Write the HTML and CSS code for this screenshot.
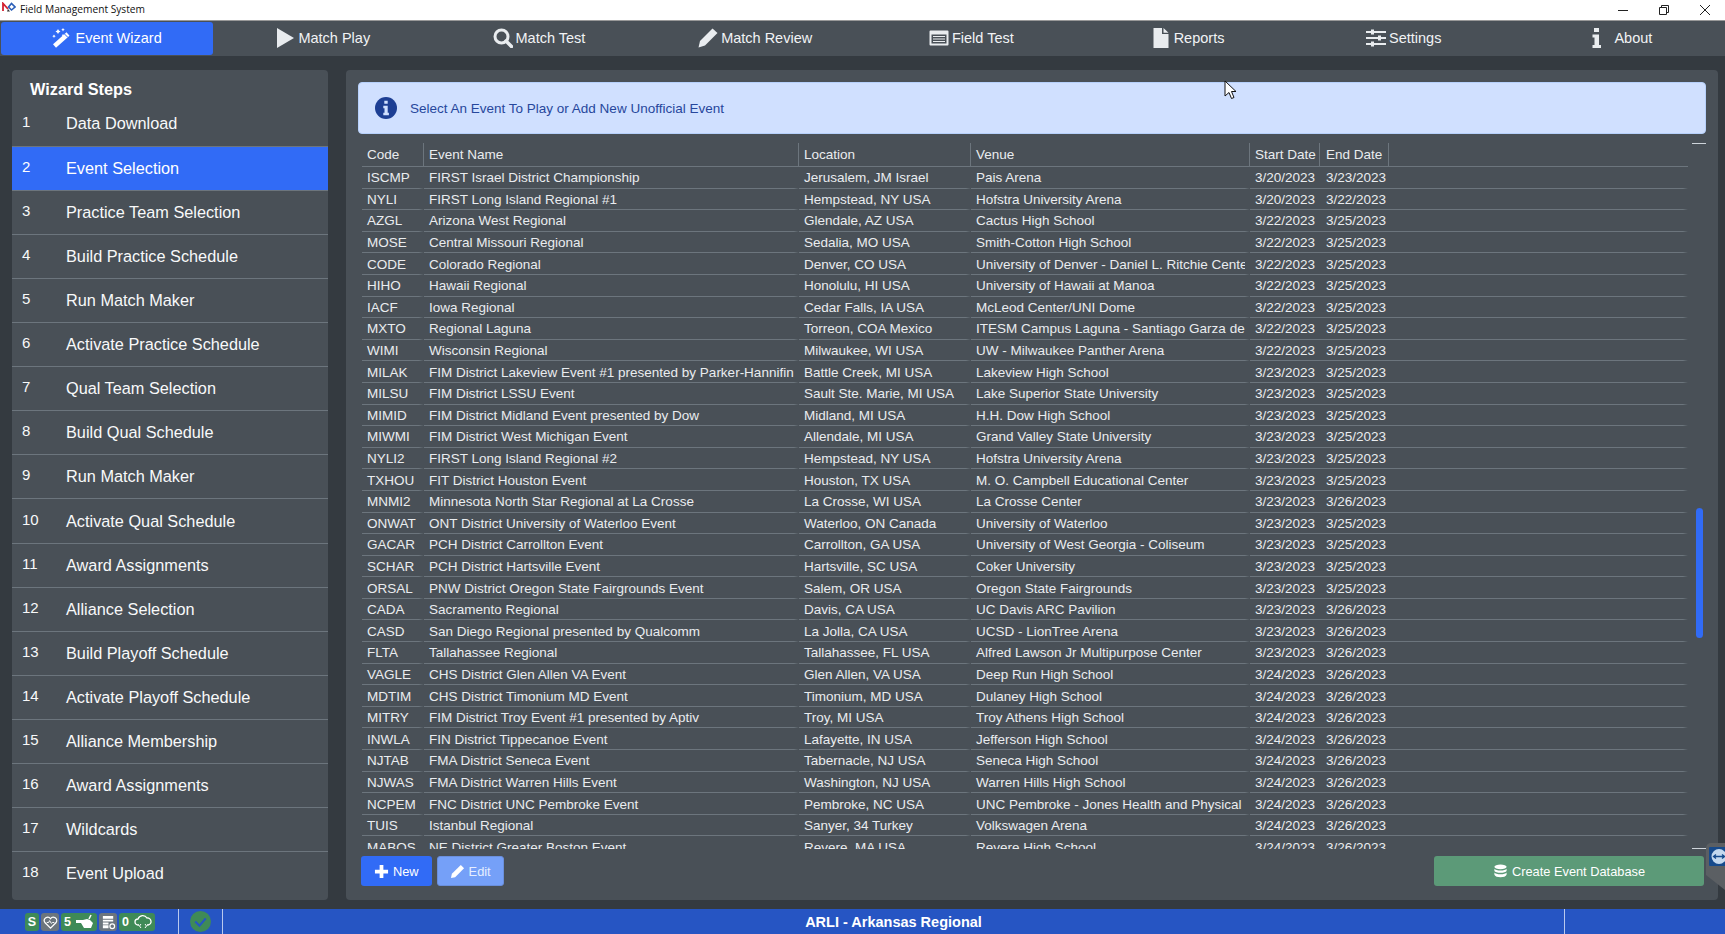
FILE: index.html
```html
<!DOCTYPE html>
<html lang="en">
<head>
    <meta charset="UTF-8">
    <title>Field Management System</title>
    <link rel="stylesheet" href="styles.css">
</head>
<body>
    <div class="titlebar">
        <svg class="app-logo" viewBox="0 0 14 10" width="14" height="10">
            <path d="M1 9V1.500L6 7" fill="none" stroke="#d3202f" stroke-width="1.800"/>
            <path d="M6 7l-1 2.500h3z" fill="#333"/>
            <path d="M6.500 5l3-3.500L13 5l-3.500 3z" fill="none" stroke="#2b5fb8" stroke-width="1.600"/>
        </svg>
        <span class="app-name">Field Management System</span>
        <div class="window-buttons">
            <svg viewBox="0 0 12 12" width="12" height="12"><path d="M1 6.500h10" stroke="#222" fill="none"/></svg>
            <svg viewBox="0 0 12 12" width="12" height="12"><path d="M1.500 3.500h7v7h-7zM3.500 3.500v-2h7v7h-2" stroke="#222" fill="none"/></svg>
            <svg viewBox="0 0 12 12" width="12" height="12"><path d="M1 1l10 10M11 1L1 11" stroke="#222" fill="none"/></svg>
        </div>
    </div>

    <nav class="topnav">
        <a class="tab tab-active">
            <svg class="tab-icon" viewBox="0 0 20 20">
                <path d="M2.500 18L16 6" stroke="#fff" stroke-width="4.500" fill="none"/>
                <path d="M12.500 6l3.500 3.500" stroke="#316bf6" stroke-width="1" fill="none"/>
                <path d="M6 1l.9 1.600L8.500 3.500l-1.600.9L6 6l-.9-1.600L3.500 3.500l1.600-.9zM11 0l.6 1.100 1.100.6-1.100.6L11 3.500l-.6-1.200-1.100-.6 1.100-.6zM2 6.500l.6 1.100 1.100.6-1.100.6L2 10l-.6-1.200L.3 8.200l1.100-.6zM11 6l.5.800.8.500-.8.500-.5.800-.5-.800-.8-.500.8-.500z"/>
            </svg>
            Event Wizard
        </a>
        <a class="tab">
            <svg class="tab-icon" viewBox="0 0 20 20"><path d="M2 0l17 10L2 20z"/></svg>
            Match Play
        </a>
        <a class="tab">
            <svg class="tab-icon" viewBox="0 0 20 20"><circle cx="8.500" cy="8.500" r="6.500" fill="none" stroke="#e9ecef" stroke-width="3"/><path d="M13 13l5.500 5.500" stroke="#e9ecef" stroke-width="3.500" stroke-linecap="round"/></svg>
            Match Test
        </a>
        <a class="tab">
            <svg class="tab-icon" viewBox="0 0 20 20"><path d="M14.500 .5L19.500 5 7 17.500 .5 19.500l1.500-6.500z"/></svg>
            Match Review
        </a>
        <a class="tab">
            <svg class="tab-icon" viewBox="0 0 20 20"><path fill-rule="evenodd" d="M1.500 2.500h17a1 1 0 0 1 1 1v13a1 1 0 0 1-1 1h-17a1 1 0 0 1-1-1v-13a1 1 0 0 1 1-1zM2.500 6.500v9h15v-9zM4 8h12v1H4zM4 10.500h12v1H4zM4 13h12v1H4z"/></svg>
            Field Test
        </a>
        <a class="tab">
            <svg class="tab-icon" viewBox="0 0 20 20"><path d="M2.500 0H11v6h6.500v14h-15zM12.500 0l5 4.800h-5z"/></svg>
            Reports
        </a>
        <a class="tab">
            <svg class="tab-icon" viewBox="0 0 20 20"><path d="M0 3h20v2H0zM0 9h20v2H0zM0 15h20v2H0z"/><path d="M5 1.500h3v5H5zM12 7.500h3v5h-3zM5 13.500h3v5H5z"/></svg>
            Settings
        </a>
        <a class="tab tab-about">
            <svg class="tab-icon" viewBox="0 0 20 20"><path d="M7 0h5v4H7zM5.500 6.500H12V17h2v3H5.500v-3h2v-7.500h-2z"/></svg>
            About
        </a>
    </nav>

    <div class="page">
        <aside class="sidebar">
            <h3>Wizard Steps</h3>
            <ul class="steps">
                <li><span class="num">1</span>Data Download</li>
                <li class="current"><span class="num">2</span>Event Selection</li>
                <li><span class="num">3</span>Practice Team Selection</li>
                <li><span class="num">4</span>Build Practice Schedule</li>
                <li><span class="num">5</span>Run Match Maker</li>
                <li><span class="num">6</span>Activate Practice Schedule</li>
                <li><span class="num">7</span>Qual Team Selection</li>
                <li><span class="num">8</span>Build Qual Schedule</li>
                <li><span class="num">9</span>Run Match Maker</li>
                <li><span class="num">10</span>Activate Qual Schedule</li>
                <li><span class="num">11</span>Award Assignments</li>
                <li><span class="num">12</span>Alliance Selection</li>
                <li><span class="num">13</span>Build Playoff Schedule</li>
                <li><span class="num">14</span>Activate Playoff Schedule</li>
                <li><span class="num">15</span>Alliance Membership</li>
                <li><span class="num">16</span>Award Assignments</li>
                <li><span class="num">17</span>Wildcards</li>
                <li><span class="num">18</span>Event Upload</li>
            </ul>
        </aside>

        <main class="content">
            <div class="alert">
                <svg class="alert-icon" viewBox="0 0 22 22"><circle cx="11" cy="11" r="11" fill="#1d3f94"/><path d="M9.300 3.800h3.400v3h-3.400zM8.300 8.800h4.400v7h1.200v2.400H8.300v-2.400h1.200v-4.600H8.300z" fill="#d0e0ff"/></svg>
                Select An Event To Play or Add New Unofficial Event
            </div>

            <div class="table-wrap">
                <table class="events">
                    <colgroup>
                        <col class="c-code"><col class="c-name"><col class="c-loc"><col class="c-venue"><col class="c-date"><col class="c-end"><col>
                    </colgroup>
                    <thead>
                        <tr><th>Code</th><th>Event Name</th><th>Location</th><th>Venue</th><th>Start Date</th><th>End Date</th><th class="filler"></th></tr>
                    </thead>
                    <tbody>
                        <tr><td>ISCMP</td><td>FIRST Israel District Championship</td><td>Jerusalem, JM Israel</td><td>Pais Arena</td><td>3/20/2023</td><td>3/23/2023</td><td></td></tr>
                        <tr><td>NYLI</td><td>FIRST Long Island Regional #1</td><td>Hempstead, NY USA</td><td>Hofstra University Arena</td><td>3/20/2023</td><td>3/22/2023</td><td></td></tr>
                        <tr><td>AZGL</td><td>Arizona West Regional</td><td>Glendale, AZ USA</td><td>Cactus High School</td><td>3/22/2023</td><td>3/25/2023</td><td></td></tr>
                        <tr><td>MOSE</td><td>Central Missouri Regional</td><td>Sedalia, MO USA</td><td>Smith-Cotton High School</td><td>3/22/2023</td><td>3/25/2023</td><td></td></tr>
                        <tr><td>CODE</td><td>Colorado Regional</td><td>Denver, CO USA</td><td>University of Denver - Daniel L. Ritchie Cente</td><td>3/22/2023</td><td>3/25/2023</td><td></td></tr>
                        <tr><td>HIHO</td><td>Hawaii Regional</td><td>Honolulu, HI USA</td><td>University of Hawaii at Manoa</td><td>3/22/2023</td><td>3/25/2023</td><td></td></tr>
                        <tr><td>IACF</td><td>Iowa Regional</td><td>Cedar Falls, IA USA</td><td>McLeod Center/UNI Dome</td><td>3/22/2023</td><td>3/25/2023</td><td></td></tr>
                        <tr><td>MXTO</td><td>Regional Laguna</td><td>Torreon, COA Mexico</td><td>ITESM Campus Laguna - Santiago Garza de</td><td>3/22/2023</td><td>3/25/2023</td><td></td></tr>
                        <tr><td>WIMI</td><td>Wisconsin Regional</td><td>Milwaukee, WI USA</td><td>UW - Milwaukee Panther Arena</td><td>3/22/2023</td><td>3/25/2023</td><td></td></tr>
                        <tr><td>MILAK</td><td>FIM District Lakeview Event #1 presented by Parker-Hannifin</td><td>Battle Creek, MI USA</td><td>Lakeview High School</td><td>3/23/2023</td><td>3/25/2023</td><td></td></tr>
                        <tr><td>MILSU</td><td>FIM District LSSU Event</td><td>Sault Ste. Marie, MI USA</td><td>Lake Superior State University</td><td>3/23/2023</td><td>3/25/2023</td><td></td></tr>
                        <tr><td>MIMID</td><td>FIM District Midland Event presented by Dow</td><td>Midland, MI USA</td><td>H.H. Dow High School</td><td>3/23/2023</td><td>3/25/2023</td><td></td></tr>
                        <tr><td>MIWMI</td><td>FIM District West Michigan Event</td><td>Allendale, MI USA</td><td>Grand Valley State University</td><td>3/23/2023</td><td>3/25/2023</td><td></td></tr>
                        <tr><td>NYLI2</td><td>FIRST Long Island Regional #2</td><td>Hempstead, NY USA</td><td>Hofstra University Arena</td><td>3/23/2023</td><td>3/25/2023</td><td></td></tr>
                        <tr><td>TXHOU</td><td>FIT District Houston Event</td><td>Houston, TX USA</td><td>M. O. Campbell Educational Center</td><td>3/23/2023</td><td>3/25/2023</td><td></td></tr>
                        <tr><td>MNMI2</td><td>Minnesota North Star Regional at La Crosse</td><td>La Crosse, WI USA</td><td>La Crosse Center</td><td>3/23/2023</td><td>3/26/2023</td><td></td></tr>
                        <tr><td>ONWAT</td><td>ONT District University of Waterloo Event</td><td>Waterloo, ON Canada</td><td>University of Waterloo</td><td>3/23/2023</td><td>3/25/2023</td><td></td></tr>
                        <tr><td>GACAR</td><td>PCH District Carrollton Event</td><td>Carrollton, GA USA</td><td>University of West Georgia - Coliseum</td><td>3/23/2023</td><td>3/25/2023</td><td></td></tr>
                        <tr><td>SCHAR</td><td>PCH District Hartsville Event</td><td>Hartsville, SC USA</td><td>Coker University</td><td>3/23/2023</td><td>3/25/2023</td><td></td></tr>
                        <tr><td>ORSAL</td><td>PNW District Oregon State Fairgrounds Event</td><td>Salem, OR USA</td><td>Oregon State Fairgrounds</td><td>3/23/2023</td><td>3/25/2023</td><td></td></tr>
                        <tr><td>CADA</td><td>Sacramento Regional</td><td>Davis, CA USA</td><td>UC Davis ARC Pavilion</td><td>3/23/2023</td><td>3/26/2023</td><td></td></tr>
                        <tr><td>CASD</td><td>San Diego Regional presented by Qualcomm</td><td>La Jolla, CA USA</td><td>UCSD - LionTree Arena</td><td>3/23/2023</td><td>3/26/2023</td><td></td></tr>
                        <tr><td>FLTA</td><td>Tallahassee Regional</td><td>Tallahassee, FL USA</td><td>Alfred Lawson Jr Multipurpose Center</td><td>3/23/2023</td><td>3/26/2023</td><td></td></tr>
                        <tr><td>VAGLE</td><td>CHS District Glen Allen VA Event</td><td>Glen Allen, VA USA</td><td>Deep Run High School</td><td>3/24/2023</td><td>3/26/2023</td><td></td></tr>
                        <tr><td>MDTIM</td><td>CHS District Timonium MD Event</td><td>Timonium, MD USA</td><td>Dulaney High School</td><td>3/24/2023</td><td>3/26/2023</td><td></td></tr>
                        <tr><td>MITRY</td><td>FIM District Troy Event #1 presented by Aptiv</td><td>Troy, MI USA</td><td>Troy Athens High School</td><td>3/24/2023</td><td>3/26/2023</td><td></td></tr>
                        <tr><td>INWLA</td><td>FIN District Tippecanoe Event</td><td>Lafayette, IN USA</td><td>Jefferson High School</td><td>3/24/2023</td><td>3/26/2023</td><td></td></tr>
                        <tr><td>NJTAB</td><td>FMA District Seneca Event</td><td>Tabernacle, NJ USA</td><td>Seneca High School</td><td>3/24/2023</td><td>3/26/2023</td><td></td></tr>
                        <tr><td>NJWAS</td><td>FMA District Warren Hills Event</td><td>Washington, NJ USA</td><td>Warren Hills High School</td><td>3/24/2023</td><td>3/26/2023</td><td></td></tr>
                        <tr><td>NCPEM</td><td>FNC District UNC Pembroke Event</td><td>Pembroke, NC USA</td><td>UNC Pembroke - Jones Health and Physical</td><td>3/24/2023</td><td>3/26/2023</td><td></td></tr>
                        <tr><td>TUIS</td><td>Istanbul Regional</td><td>Sanyer, 34 Turkey</td><td>Volkswagen Arena</td><td>3/24/2023</td><td>3/26/2023</td><td></td></tr>
                        <tr><td>MABOS</td><td>NE District Greater Boston Event</td><td>Revere, MA USA</td><td>Revere High School</td><td>3/24/2023</td><td>3/26/2023</td><td></td></tr>
                    </tbody>
                </table>
                <div class="scroll-cap scroll-cap-top"></div>
                <div class="scroll-thumb"></div>
                <div class="scroll-cap scroll-cap-bottom"></div>
            </div>

            <div class="actions">
                <button class="btn btn-primary">
                    <svg class="btn-icon" viewBox="0 0 16 16"><path d="M6 1h4v5h5v4h-5v5H6v-5H1V6h5z"/></svg>
                    New
                </button>
                <button class="btn btn-disabled">
                    <svg class="btn-icon" viewBox="0 0 16 16"><path d="M11.500 1L15 4.500 5.500 14 1 15l1-4.500z"/></svg>
                    Edit
                </button>
                <button class="btn btn-create">
                    <svg class="btn-icon" viewBox="0 0 16 16"><ellipse cx="8" cy="3" rx="6.500" ry="2.500"/><path d="M1.500 5c1 2.600 12 2.600 13 0v2.500c-1 2.600-12 2.600-13 0zM1.500 9c1 2.600 12 2.600 13 0v2.500c-1 3.600-12 3.600-13 0z"/></svg>
                    Create Event Database
                </button>
            </div>
        </main>
    </div>

    <footer class="statusbar">
        <div class="status-icons">
            <span class="pill pill-green pill-s">S</span>
            <span class="pill pill-gray pill-icon">
                <svg viewBox="0 0 16 16" width="15" height="15"><path d="M8 14L2 8a3.500 3.500 0 0 1 6-4 3.500 3.500 0 0 1 6 4z" fill="none" stroke="#fff" stroke-width="1.300"/><path d="M4 8h2l1-2 2 3 1-1h2" fill="none" stroke="#fff"/></svg>
            </span>
            <span class="pill pill-green pill-wide">5
                <svg viewBox="0 0 20 16" width="20" height="16"><path d="M1 6h7l4-1 3 1 3 3-2 5H9L6 9H1z" fill="#fff"/><path d="M14 5l2-4" stroke="#fff" stroke-width="1.500"/></svg>
            </span>
            <span class="pill pill-gray pill-icon">
                <svg viewBox="0 0 16 16" width="15" height="15"><path d="M2 1h11v3H2zM2 5h11v2H2zM2 8h6v2H2zM2 11h6v3H2z" fill="#fff"/><circle cx="12" cy="12" r="2.500" fill="none" stroke="#fff" stroke-width="1.300"/></svg>
            </span>
            <span class="pill pill-green pill-wide">0
                <svg viewBox="0 0 18 16" width="20" height="16"><path d="M5 11H4a3 3 0 0 1 0-6 5 5 0 0 1 9-1 3.500 3.500 0 0 1 1 7h-1" fill="none" stroke="#fff" stroke-width="1.300"/><path d="M7 14l-1.500-2L7 10M11 10l1.500 2-1.500 2" fill="none" stroke="#fff"/></svg>
            </span>
        </div>
        <div class="status-check">
            <svg viewBox="0 0 20 20" width="21" height="21"><circle cx="10" cy="10" r="10" fill="#3f8a57"/><path d="M5 10l4 4 6-7" fill="none" stroke="#2655c3" stroke-width="2"/></svg>
        </div>
        <div class="status-title">ARLI - Arkansas Regional</div>
        <div class="status-end"></div>
    </footer>

    <!-- bits of other windows sitting over the app -->
    <div class="remote-tab">
        <svg viewBox="0 0 17 19" width="17" height="19"><rect width="17" height="19" rx="1" fill="#164a8c"/><circle cx="10" cy="9.500" r="7.500" fill="#c4d8ee"/><path d="M4.500 9.500h11M7 7.500L4.500 9.500 7 11.500M13 7.500l2.500 2-2.500 2" fill="none" stroke="#164a8c" stroke-width="1.300"/></svg>
    </div>
    <svg class="cursor" viewBox="0 0 13 20" width="13" height="20"><path d="M1 1v15l4-3.500 2.500 6 2.500-1-2.500-6H12z" fill="#fff" stroke="#111"/></svg>
</body>
</html>
```

FILE: styles.css
```css
* {
    box-sizing: border-box;
}

html, body {
    height: 100%;
}

body {
    margin: 0;
    display: flex;
    flex-direction: column;
    overflow: hidden;
    font-family: "Liberation Sans", Arial, sans-serif;
    background-color: #343a40;
    color: #e9ecef;
}

.titlebar {
    height: 21px;
    flex: none;
    display: flex;
    align-items: center;
    padding-left: 2px;
    background: white;
    border-bottom: 1px solid #999;
    color: #111;
}

.app-logo {
    margin-right: 4px;
    margin-top: -6px;
}

.app-name {
    font-family: "Open Sans", sans-serif;
    font-size: 10.2px;
    margin-top: -3px;
}

.window-buttons {
    margin-left: auto;
    display: flex;
    gap: 29px;
    padding-right: 14px;
}

.topnav {
    height: 35px;
    flex: none;
    display: grid;
    grid-template-columns: repeat(8, 216.2px);
    overflow: hidden;
    background-color: #495057;
}

.tab {
    display: flex;
    align-items: center;
    justify-content: center;
    gap: 3px;
    padding-bottom: 1px;
    font-size: 14.5px;
    color: #f1f3f5;
    border-radius: 3px;
    margin: 1px 3px 1px 0;
}

.tab-active {
    margin-left: 1px;
    background-color: #316bf6;
    color: white;
}

.tab-about {
    gap: 7px;
}

.tab-icon {
    width: 20px;
    height: 20px;
    fill: #e9ecef;
}

.tab-active .tab-icon {
    fill: white;
}

.page {
    height: 853px;
    flex: none;
    display: flex;
    gap: 18px;
    padding: 14px 7px 9px 12px;
}

.sidebar {
    width: 316px;
    flex: none;
    background-color: #495057;
    border-radius: 4px;
}

.sidebar h3 {
    margin: 0;
    height: 31.5px;
    padding: 10px 0 0 18px;
    font-size: 16.3px;
    line-height: 18px;
    color: white;
}

.steps {
    list-style: none;
    margin: 0;
    padding: 0;
}

.steps li {
    display: flex;
    align-items: center;
    height: 44.12px;
    font-size: 16.3px;
    color: #f8f9fa;
    border-top: 1px solid #6c757d;
}

.steps li:first-child {
    border-top: none;
}

.steps li.current {
    background-color: #316bf6;
    color: white;
}

.steps .num {
    width: 54px;
    padding-left: 10px;
    margin-top: -4px;
    font-size: 15px;
}

.content {
    flex: 1;
    position: relative;
    background-color: #495057;
    border-radius: 4px;
    padding: 12px 12px 0 12px;
    display: flex;
    flex-direction: column;
}

.alert {
    height: 52px;
    flex: none;
    display: flex;
    align-items: center;
    gap: 13px;
    padding-left: 16px;
    font-size: 13.5px;
    color: #27479c;
    background-color: #d0e0ff;
    border: 1px solid #b6d0fb;
    border-radius: 4px;
}

.alert-icon {
    width: 22px;
    height: 22px;
}

.table-wrap {
    position: relative;
    height: 715px;
    flex: none;
    overflow: hidden;
    padding: 9px 0 0 4px;
}

.events {
    width: 1326px;
    table-layout: fixed;
    border-collapse: separate;
    border-spacing: 0;
    font-size: 13.5px;
}

.c-code { width: 62px; }
.c-name { width: 375px; }
.c-loc { width: 172px; }
.c-venue { width: 279px; }
.c-date { width: 70px; }
.c-end { width: 69px; }

.events th {
    height: 24px;
    padding: 0 0 0 5px;
    font-weight: normal;
    text-align: left;
    white-space: nowrap;
    border-right: 1px solid #6c757d;
    border-bottom: 1px solid #6c757d;
}

.events th.filler {
    border-right: none;
}

/* right border is clear on purpose, it keeps long names clipped short of the next column */
.events td {
    height: 21.6px;
    padding: 1px 0 0 5px;
    white-space: nowrap;
    overflow: hidden;
    border-right: 5px solid transparent;
    border-bottom: 1px solid #6c757d;
}

.events th:nth-child(6),
.events td:nth-child(6) {
    padding-left: 6px;
}

.events td:nth-child(6),
.events td:nth-child(5) {
    border-right-width: 0;
}

.scroll-cap {
    position: absolute;
    left: 1334px;
    width: 15px;
    height: 1px;
    background-color: #ced4da;
}

.scroll-cap-top {
    top: 9px;
}

.scroll-cap-bottom {
    bottom: 0;
}

.scroll-thumb {
    position: absolute;
    left: 1338px;
    top: 374px;
    width: 7px;
    height: 130px;
    background-color: #316bf6;
    border-radius: 4px;
}

.actions {
    display: flex;
    gap: 5px;
    padding: 7px 2px 0 3px;
}

.btn {
    height: 30px;
    display: flex;
    align-items: center;
    justify-content: center;
    gap: 4px;
    padding: 0 12px;
    font-family: inherit;
    font-size: 12.8px;
    color: white;
    border: 1px solid transparent;
    border-radius: 3px;
}

.btn-icon {
    width: 15px;
    height: 15px;
    fill: white;
}

.btn-primary {
    background-color: #316bf6;
}

.btn-disabled {
    background-color: #75a0f8;
    border-color: #6a8fdc;
    color: #e6eeff;
}

.btn-create {
    width: 270px;
    margin-left: auto;
    background-color: #5c9a78;
}

.statusbar {
    flex: 1;
    display: flex;
    align-items: stretch;
    background-color: #2655c3;
    color: white;
}

.status-icons {
    width: 179px;
    display: flex;
    align-items: center;
    gap: 2px;
    padding-left: 25px;
    padding-top: 1px;
    border-right: 1px solid #b9c9ee;
}

.pill {
    height: 18px;
    flex: none;
    display: flex;
    align-items: center;
    justify-content: space-between;
    padding: 0 2px 0 3px;
    font-size: 12.5px;
    font-weight: bold;
    border-radius: 3px;
}

.pill-green {
    background-color: #3f8a57;
}

.pill-gray {
    background-color: #6c757d;
}

.pill-s {
    width: 14px;
    justify-content: center;
    padding: 0;
}

.pill-icon {
    width: 18px;
    justify-content: center;
    padding: 0;
}

.pill-wide {
    width: 36px;
}

.status-check {
    width: 44px;
    display: flex;
    align-items: center;
    justify-content: center;
    border-right: 1px solid #b9c9ee;
}

.status-title {
    width: 1342px;
    display: flex;
    align-items: center;
    justify-content: center;
    padding-top: 1px;
    font-size: 14.5px;
    font-weight: bold;
    border-right: 1px solid #b9c9ee;
}

.status-end {
    flex: 1;
}

.remote-tab {
    position: absolute;
    left: 1706px;
    top: 843px;
    width: 19px;
    height: 47px;
    padding: 4px 0 0 3px;
    background-color: #5b5f63;
    border-radius: 5px 0 0 0;
    clip-path: polygon(0 0, 100% 0, 100% 100%, 0 68%);
}

.cursor {
    position: absolute;
    left: 1224px;
    top: 80px;
}
```
